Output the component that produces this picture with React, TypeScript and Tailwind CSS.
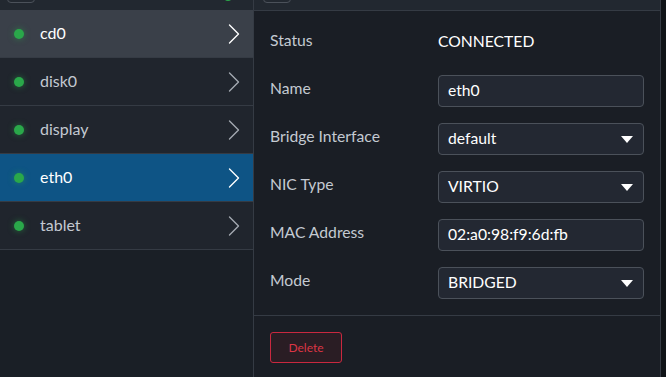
import type { ReactNode } from 'react'

type Device = {
  name: string
  state: 'hover' | 'selected' | 'idle'
}

const devices: Device[] = [
  { name: 'cd0', state: 'hover' },
  { name: 'disk0', state: 'idle' },
  { name: 'display', state: 'idle' },
  { name: 'eth0', state: 'selected' },
  { name: 'tablet', state: 'idle' },
]

function Chevron({ bright }: { bright: boolean }) {
  return (
    <svg
      width="12"
      height="20"
      viewBox="0 0 12 20"
      fill="none"
      className={bright ? 'text-white' : 'text-[#a3a9b1]'}
      aria-hidden="true"
    >
      <polyline
        points="1.5,1 10.5,10 1.5,19"
        stroke="currentColor"
        strokeWidth="1.4"
        strokeLinecap="round"
        strokeLinejoin="round"
      />
    </svg>
  )
}

function DeviceRow({ device }: { device: Device }) {
  const bg =
    device.state === 'selected'
      ? 'bg-[#0e5485]'
      : device.state === 'hover'
        ? 'bg-[#3a4049]'
        : 'bg-[#20252d]'
  const bright = device.state !== 'idle'
  return (
    <li
      className={`flex h-[48px] items-center border-b border-[#353b44] pr-[13px] pl-[14px] ${bg}`}
    >
      <span className="h-[10px] w-[10px] shrink-0 rounded-full bg-[#2aa84a] shadow-[0_0_6px_rgba(42,168,74,0.55)]" />
      <span
        className={`ml-[16px] flex-1 pb-[2px] text-[16px] ${bright ? 'text-white' : 'text-[#c3c9d1]'}`}
      >
        {device.name}
      </span>
      <Chevron bright={bright} />
    </li>
  )
}

function Field({ label, children }: { label: string; children: ReactNode }) {
  return (
    <>
      <div className="flex h-[32px] items-center pb-[4px] text-[15.7px] text-[#c4cad2]">
        {label}
      </div>
      <div className="flex h-[32px] items-center">{children}</div>
    </>
  )
}

function TextBox({ value }: { value: string }) {
  return (
    <div className="flex h-[32px] w-full items-center rounded-[4px] border border-[#4b515a] bg-[#232832] px-[9px] text-[15.7px] text-white">
      {value}
    </div>
  )
}

function SelectBox({ value }: { value: string }) {
  return (
    <div className="flex h-[32px] w-full items-center justify-between rounded-[4px] border border-[#4b515a] bg-[#232832] pr-[10px] pl-[9px] text-[15.7px] text-white">
      <span>{value}</span>
      <svg width="12" height="7" viewBox="0 0 12 7" aria-hidden="true">
        <polygon points="0,0 12,0 6,7" fill="#ffffff" />
      </svg>
    </div>
  )
}

export default function App() {
  return (
    <div
      className="flex h-[377px] w-[666px] overflow-hidden bg-[#0f1317]"
      style={{ fontFamily: 'Lato, "Noto Sans", sans-serif' }}
    >
      <aside className="flex w-[254px] shrink-0 flex-col border-r border-[#353b44] bg-[#1a1f26]">
        <div className="flex h-[10px] shrink-0 items-end justify-between overflow-hidden bg-[#222830] pr-[20px] pl-[7px]">
          <div className="mb-[7px] h-[24px] w-[28px] shrink-0 rounded-[4px] border border-[#4b515a]" />
          <span className="mb-[9px] h-[10px] w-[10px] rounded-full bg-[#2aa84a]" />
        </div>
        <ul>
          {devices.map((d) => (
            <DeviceRow key={d.name} device={d} />
          ))}
        </ul>
      </aside>

      <section className="flex w-[407px] shrink-0 flex-col border-r border-[#353b44] bg-[#1a1e25]">
        <div className="flex h-[11px] shrink-0 items-end overflow-hidden border-b border-[#353b44] bg-[#222830] pl-[9px]">
          <div className="mb-[7px] h-[24px] w-[28px] rounded-[4px] border border-[#4b515a]" />
        </div>
        <div className="grid grid-cols-[168px_1fr] gap-y-[16px] border-b border-[#353b44] px-[16px] pt-[16px] pb-[16px]">
          <Field label="Status">
            <span className="pb-[3px] text-[15.7px] text-white">CONNECTED</span>
          </Field>
          <Field label="Name">
            <TextBox value="eth0" />
          </Field>
          <Field label="Bridge Interface">
            <SelectBox value="default" />
          </Field>
          <Field label="NIC Type">
            <SelectBox value="VIRTIO" />
          </Field>
          <Field label="MAC Address">
            <TextBox value="02:a0:98:f9:6d:fb" />
          </Field>
          <Field label="Mode">
            <SelectBox value="BRIDGED" />
          </Field>
        </div>
        <div className="px-[16px] pt-[16px]">
          <button
            type="button"
            className="h-[31px] w-[72px] rounded-[3px] border border-[#c9283f] bg-[#2a1d24] text-[12px] text-[#dc3545]"
          >
            Delete
          </button>
        </div>
      </section>
    </div>
  )
}
